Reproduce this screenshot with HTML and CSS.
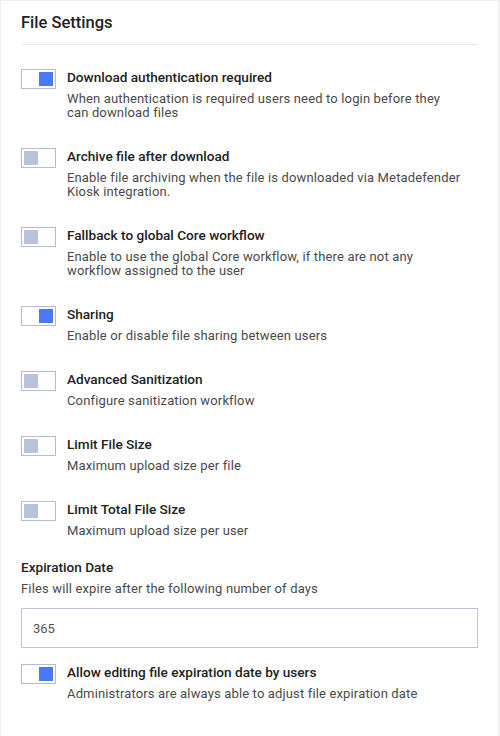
FILE: index.html
```html
<html>

<head>
    <link rel="stylesheet" href="styles.css">
</head>

<body>
    <main class="card">
        <h2 class="card-title">File Settings</h2>

        <section class="settings">
            <div class="setting">
                <span class="toggle on"><span class="knob"></span></span>
                <div class="setting-text">
                    <div class="setting-title">Download authentication required</div>
                    <div class="setting-desc">When authentication is required users need to login before they can download files</div>
                </div>
            </div>
            <div class="setting">
                <span class="toggle"><span class="knob"></span></span>
                <div class="setting-text">
                    <div class="setting-title">Archive file after download</div>
                    <div class="setting-desc">Enable file archiving when the file is downloaded via Metadefender Kiosk integration.</div>
                </div>
            </div>
            <div class="setting">
                <span class="toggle"><span class="knob"></span></span>
                <div class="setting-text">
                    <div class="setting-title">Fallback to global Core workflow</div>
                    <div class="setting-desc">Enable to use the global Core workflow, if there are not any workflow assigned to the user</div>
                </div>
            </div>
            <div class="setting">
                <span class="toggle on"><span class="knob"></span></span>
                <div class="setting-text">
                    <div class="setting-title">Sharing</div>
                    <div class="setting-desc">Enable or disable file sharing between users</div>
                </div>
            </div>
            <div class="setting">
                <span class="toggle"><span class="knob"></span></span>
                <div class="setting-text">
                    <div class="setting-title">Advanced Sanitization</div>
                    <div class="setting-desc">Configure sanitization workflow</div>
                </div>
            </div>
            <div class="setting">
                <span class="toggle"><span class="knob"></span></span>
                <div class="setting-text">
                    <div class="setting-title">Limit File Size</div>
                    <div class="setting-desc">Maximum upload size per file</div>
                </div>
            </div>
            <div class="setting">
                <span class="toggle"><span class="knob"></span></span>
                <div class="setting-text">
                    <div class="setting-title">Limit Total File Size</div>
                    <div class="setting-desc">Maximum upload size per user</div>
                </div>
            </div>
        </section>

        <section class="expiration">
            <label class="setting-title" for="expire-days">Expiration Date</label>
            <div class="setting-desc">Files will expire after the following number of days</div>
            <input type="text" id="expire-days" class="text-input" value="365">
            <div class="setting">
                <span class="toggle on"><span class="knob"></span></span>
                <div class="setting-text">
                    <div class="setting-title">Allow editing file expiration date by users</div>
                    <div class="setting-desc">Administrators are always able to adjust file expiration date</div>
                </div>
            </div>
        </section>
    </main>
</body>

</html>
```

FILE: styles.css
```css
html {
    background-color: #f1f1f3;
    font-family: Roboto, 'Liberation Sans', sans-serif;
    color: #222;
}

body {
    margin: 0;
}

main.card {
    margin: 1px 2px 0 1px;
    background: #fff;
    padding: 0 20px 40px;
    min-height: 735px;
    box-sizing: border-box;
}

h2.card-title {
    margin: 0;
    padding: 12px 0 11px;
    font-size: 16.5px;
    line-height: 20px;
    font-weight: 500;
    color: #222;
    border-bottom: 1px solid #e6e8ef;
}

section.settings {
    display: flex;
    flex-direction: column;
    gap: 28px;
    margin-top: 24px;
}

div.setting {
    display: flex;
    gap: 11px;
    align-items: flex-start;
}

div.setting-text {
    max-width: 396px;
}

.setting-title {
    display: block;
    font-size: 13.6px;
    line-height: 17px;
    font-weight: 500;
    color: #222;
}

.setting-desc {
    margin-top: 6px;
    font-size: 13px;
    line-height: 14px;
    letter-spacing: 0.15px;
    color: #4a4a4a;
}

span.toggle {
    flex: none;
    display: flex;
    width: 35px;
    height: 20px;
    box-sizing: border-box;
    border: 1px solid #b2bcd9;
    padding: 2px;
    background: #fff;
}

span.toggle .knob {
    width: 14px;
    height: 14px;
    background: #b9c2dd;
}

span.toggle.on {
    justify-content: flex-end;
}

span.toggle.on .knob {
    background: #4a78f6;
}

section.expiration {
    margin-top: 21px;
}

input.text-input {
    display: block;
    width: 100%;
    height: 40px;
    box-sizing: border-box;
    margin: 12px 0 16px;
    padding: 0 11px;
    border: 1px solid #b9c3de;
    font-family: inherit;
    font-size: 13px;
    color: #555;
    outline: none;
}
```
